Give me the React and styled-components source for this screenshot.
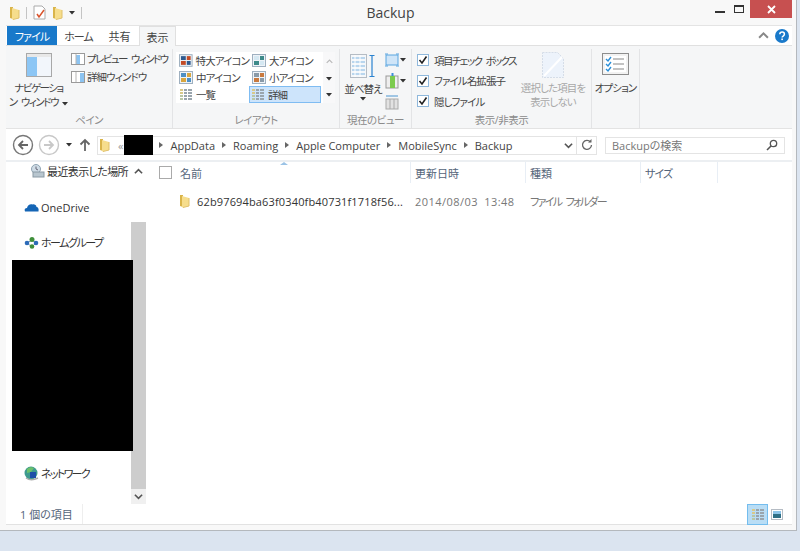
import React from 'react';
import styled, { createGlobalStyle } from 'styled-components';

const GlobalStyle = createGlobalStyle`
  html, body {
    margin: 0;
    padding: 0;
    background: #dbe4f0;
  }
  body {
    font-family: "Open Sans", "Noto Sans CJK JP", sans-serif;
    font-feature-settings: "palt";
    font-size: 11px;
    color: #333;
  }
`;

const Page = styled.div`
  width: 800px;
  height: 551px;
  overflow: hidden;
  background: #dbe4f0;
`;

const Window = styled.div`
  width: 797px;
  height: 531px;
  box-sizing: border-box;
  padding: 0 4px 5px 6px;
  background: #f8f8f8;
  border-right: 1px solid #b4b8bd;
  border-bottom: 1px solid #b4b8bd;
  display: flex;
  flex-direction: column;
`;

const TitleBar = styled.div`
  height: 25px;
  flex: none;
  position: relative;
  display: flex;
  align-items: center;
  justify-content: center;
`;

const QuickAccess = styled.div`
  position: absolute;
  left: 3px;
  top: 5px;
  display: flex;
  align-items: center;
  gap: 6px;
`;

const QuickSep = styled.span`
  width: 1px;
  height: 12px;
  background: #c4c4c4;
`;

const Title = styled.div`
  font-size: 14px;
  color: #444;
  margin-right: 17px;
`;

const WindowButtons = styled.div`
  position: absolute;
  right: 0;
  top: 0;
  height: 18px;
  display: flex;
  align-items: flex-start;
`;

const MinButton = styled.span`
  width: 10px;
  height: 2px;
  background: #333;
  margin: 11px 9px 0 0;
`;

const MaxButton = styled.span`
  width: 8px;
  height: 5px;
  border: 1px solid #333;
  border-top-width: 2px;
  margin: 5px 6px 0 0;
`;

const CloseButton = styled.span`
  width: 42px;
  height: 18px;
  background: #c75050;
  color: #fff;
  display: flex;
  align-items: center;
  justify-content: center;
`;

const TabRow = styled.div`
  height: 21px;
  flex: none;
  box-sizing: border-box;
  display: flex;
  align-items: stretch;
  background: #fff;
  border-top: 1px solid #e4e4e4;
  border-bottom: 1px solid #e0e0e0;
  position: relative;
`;

const FileTab = styled.div`
  width: 50px;
  margin-left: 1px;
  background: #1979ca;
  color: #fff;
  letter-spacing: -0.9px;
  display: flex;
  align-items: center;
  justify-content: center;
`;

const Tab = styled.div`
  width: ${(p) => p.$width}px;
  display: flex;
  align-items: center;
  justify-content: center;
  color: #444;
  letter-spacing: ${(p) => p.$tight || 0}px;
  box-sizing: border-box;
  ${(p) => p.$active && `
    background: #f5f6f7;
    border: 1px solid #e0e0e0;
    border-bottom: none;
    margin-bottom: -1px;
    position: relative;
  `}
`;

const TabRight = styled.div`
  margin-left: auto;
  display: flex;
  align-items: center;
  gap: 6px;
  padding-right: 3px;
`;

const Ribbon = styled.div`
  height: 83px;
  flex: none;
  box-sizing: border-box;
  display: flex;
  background: #f5f6f7;
  border-bottom: 1px solid #e3e3e3;
  font-size: 10.5px;
  letter-spacing: -0.9px;
  word-spacing: 3px;
`;

const Group = styled.div`
  width: ${(p) => p.$width}px;
  flex: none;
  box-sizing: border-box;
  display: flex;
  flex-direction: column;
  margin-top: 3px;
  border-right: 1px solid #e3e4e6;
`;

const GroupBody = styled.div`
  flex: 1;
  display: flex;
  min-height: 0;
`;

const GroupLabel = styled.div`
  height: 15px;
  flex: none;
  text-align: center;
  color: #8a8a8a;
  line-height: 14px;
  letter-spacing: -0.5px;
`;

const BigButton = styled.div`
  width: ${(p) => p.$width}px;
  margin-left: ${(p) => p.$left || 0}px;
  padding-top: ${(p) => p.$top || 0}px;
  display: flex;
  flex-direction: column;
  align-items: center;
  flex: none;
  text-align: center;
  line-height: 14px;
  color: ${(p) => (p.$disabled ? '#a8a8a8' : '#444')};
`;

const BigCaption = styled.div`
  margin-top: ${(p) => p.$gap || 2}px;
  letter-spacing: ${(p) => p.$tight || -0.9}px;
  white-space: nowrap;
`;

const CaretLine = styled.div`
  height: 6px;
  display: flex;
  align-items: center;
  justify-content: center;
`;

const PaneList = styled.div`
  display: flex;
  flex-direction: column;
  gap: 3px;
  padding-top: 2px;
`;

const SmallRow = styled.div`
  height: 15px;
  display: flex;
  align-items: center;
  gap: 2px;
  white-space: nowrap;
  letter-spacing: ${(p) => p.$tight || -0.9}px;
  color: #444;
`;

const Gallery = styled.div`
  display: flex;
  margin: 3px 0 0 3px;
  height: 51px;
`;

const GalleryGrid = styled.div`
  width: 147px;
  display: grid;
  grid-template-columns: 73px 74px;
  grid-auto-rows: 17px;
  background: #fff;
`;

const GalleryItem = styled.div`
  display: flex;
  align-items: center;
  gap: 3px;
  padding-left: 3px;
  box-sizing: border-box;
  white-space: nowrap;
  color: #444;
  ${(p) => p.$selected && `
    background: #cde4fb;
    border: 1px solid #7fbcf2;
    padding-left: 1px;
    margin-right: 2px;
  `}
`;

const GalleryScroll = styled.div`
  width: 12px;
  display: flex;
  flex-direction: column;
  align-items: center;
  justify-content: space-around;
  background: #f8f8f9;
`;

const ViewIcons = styled.div`
  display: flex;
  flex-direction: column;
  gap: 5px;
  padding-top: 3px;
`;

const ViewIcon = styled.div`
  display: flex;
  align-items: center;
  gap: 1px;
  height: 16px;
`;

const Checks = styled.div`
  display: flex;
  flex-direction: column;
  gap: 4.5px;
  padding: 3px 0 0 5px;
  width: 108px;
  box-sizing: border-box;
  flex: none;
`;

const CheckRow = styled.div`
  height: 16px;
  display: flex;
  align-items: center;
  gap: 5px;
  white-space: nowrap;
  letter-spacing: ${(p) => p.$tight || -0.9}px;
  color: #444;
`;

const CheckBox = styled.span`
  width: 10px;
  height: 10px;
  border: 1px solid #8fb8dc;
  background: #fff;
  display: flex;
  align-items: center;
  justify-content: center;
  flex: none;
`;

const AddressBar = styled.div`
  height: 33px;
  flex: none;
  background: #fff;
  display: flex;
  align-items: center;
  border-bottom: 2px solid #eceff2;
  box-sizing: border-box;
  padding-top: 1px;
`;

const NavButtons = styled.div`
  width: 91px;
  flex: none;
  display: flex;
  align-items: center;
  padding-left: 6px;
  box-sizing: border-box;
`;

const Spacer = styled.span`
  width: ${(p) => p.$width}px;
  flex: none;
`;

const AddressBox = styled.div`
  width: 500px;
  height: 19px;
  flex: none;
  box-sizing: border-box;
  border: 1px solid #e4e4e4;
  display: flex;
  align-items: center;
  position: relative;
  color: #444;
`;

const Crumb = styled.span`
  font-size: 11px;
  white-space: nowrap;
  color: ${(p) => (p.$muted ? '#999' : '#444')};
`;

const CrumbArrow = styled.span`
  width: 0;
  height: 0;
  border-left: 4px solid #666;
  border-top: 3px solid transparent;
  border-bottom: 3px solid transparent;
  margin: 0 7px;
`;

const Redaction = styled.span`
  width: 29px;
  height: 20px;
  background: #000;
  margin: 0 -1px 0 1px;
  flex: none;
`;

const AddressEnd = styled.div`
  margin-left: auto;
  height: 100%;
  display: flex;
  align-items: center;
`;

const RefreshCell = styled.div`
  width: 19px;
  height: 100%;
  border-left: 1px solid #e4e4e4;
  margin-left: 3px;
  display: flex;
  align-items: center;
  justify-content: center;
`;

const SearchBox = styled.div`
  width: 180px;
  height: 17px;
  margin-left: 8px;
  box-sizing: border-box;
  border: 1px solid #e4e4e4;
  padding: 0 6px;
  display: flex;
  align-items: center;
  justify-content: space-between;
  color: #777;
`;

const Body = styled.div`
  flex: 1;
  min-height: 0;
  display: flex;
  background: #fff;
`;

const Sidebar = styled.div`
  width: 125px;
  flex: none;
  position: relative;
`;

const NavItem = styled.div`
  display: flex;
  align-items: center;
  gap: 2px;
  height: 16px;
  position: relative;
  padding-left: ${(p) => p.$indent}px;
  margin-top: ${(p) => p.$top}px;
  letter-spacing: ${(p) => p.$tight || 0}px;
  white-space: nowrap;
  color: #333;
`;

const BlackBlock = styled.div`
  width: 121px;
  height: 191px;
  margin: 10px 0 0 6px;
  background: #000;
  position: relative;
`;

const ScrollBar = styled.div`
  width: 15px;
  flex: none;
  background: #fff;
  display: flex;
  flex-direction: column;
  align-items: center;
`;

const ScrollEnd = styled.div`
  height: ${(p) => (p.$bottom ? 15 : 18)}px;
  width: 100%;
  flex: none;
  background: ${(p) => (p.$bottom ? '#f0f0f0' : '#fff')};
  display: flex;
  align-items: center;
  justify-content: center;
`;

const ScrollGap = styled.div`
  height: 42px;
  flex: none;
`;

const ScrollThumb = styled.div`
  flex: 1;
  width: 100%;
  background: #cdcdcd;
`;

const Files = styled.div`
  flex: 1;
  min-width: 0;
  position: relative;
`;

const HeaderRow = styled.div`
  height: 21px;
  display: flex;
  align-items: stretch;
  position: relative;
`;

const HeaderCell = styled.div`
  width: ${(p) => p.$width}px;
  flex: none;
  box-sizing: border-box;
  padding-left: ${(p) => p.$pad}px;
  letter-spacing: ${(p) => p.$tight || 0}px;
  display: flex;
  align-items: center;
  color: #55657a;
  border-right: 1px solid #e8eef5;
`;

const HeaderCheck = styled.span`
  width: 11px;
  height: 11px;
  border: 1px solid #aaa;
  margin-right: 8px;
  flex: none;
`;

const SortCaret = styled.span`
  position: absolute;
  left: 134px;
  top: 0;
  width: 0;
  height: 0;
  border-left: 4px solid transparent;
  border-right: 4px solid transparent;
  border-bottom: 3px solid #9bc3e6;
`;

const FileRow = styled.div`
  height: 22px;
  margin-top: 7px;
  display: flex;
  align-items: center;
`;

const FileCell = styled.div`
  width: ${(p) => p.$width}px;
  flex: none;
  box-sizing: border-box;
  padding-left: ${(p) => p.$pad}px;
  display: flex;
  align-items: center;
  gap: 7px;
  white-space: nowrap;
  letter-spacing: ${(p) => p.$spacing || 0}px;
  word-spacing: 3px;
  color: ${(p) => (p.$muted ? '#777' : '#333')};
  font-size: 11px;
`;

const StatusBar = styled.div`
  height: 21px;
  flex: none;
  box-sizing: border-box;
  background: #fff;
  display: flex;
  align-items: center;
  padding-left: 14px;
  color: #55657a;
  border-bottom: 1px solid #e2e2e2;
`;

const StatusText = styled.div`
  width: 62px;
  height: 100%;
  display: flex;
  align-items: center;
  border-right: 1px solid #eee;
`;

const ViewToggles = styled.div`
  margin-left: auto;
  margin-right: 9px;
  display: flex;
  align-items: center;
  gap: 3px;
`;

const ToggleButton = styled.div`
  width: ${(p) => (p.$on ? 21 : 12)}px;
  height: ${(p) => (p.$on ? 21 : 12)}px;
  box-sizing: border-box;
  display: flex;
  align-items: center;
  justify-content: center;
  ${(p) => p.$on && 'background: #b9ddf5; border: 1px solid #74bdee;'}
`;

const Folder = () => (
  <svg width="11" height="14" viewBox="0 0 11 14">
    <path d="M1 1l3 0 0 12-3-1z" fill="#d9b44a" />
    <path d="M3 2l7 2v8l-7 1.5z" fill="#f6dd8c" />
    <path d="M10 4v8l-6 1.5" fill="none" stroke="#e0c06a" />
  </svg>
);

const PaneIcon = ({ right }) => (
  <svg width="14" height="14" viewBox="0 0 14 14">
    <rect x=".5" y="1.5" width="13" height="11" fill="#fff" stroke="#9a9a9a" />
    {right ? (
      <rect x="9" y="3" width="4" height="9" fill="#8cc4f2" />
    ) : (
      <rect x="5" y="3" width="4" height="9" fill="#8cc4f2" />
    )}
    <path d="M5 2v10" stroke="#b5b5b5" />
  </svg>
);

const NavPaneIcon = () => (
  <svg width="26" height="24" viewBox="0 0 26 24">
    <rect x=".5" y=".5" width="25" height="23" fill="#fff" stroke="#a8a8a8" />
    <rect x="1" y="1" width="24" height="3" fill="#e8e8e8" />
    <rect x="1" y="4" width="10" height="19" fill="#8cc6f5" />
    <rect x="11" y="4" width="14" height="19" fill="#f2f6fb" />
  </svg>
);

const Thumb = ({ kind }) => {
  const fills = {
    xl: ['#2e5a8f', '#c24a25'],
    l: ['#d5e8f2', '#3d8a8a'],
    m: ['#4d8fc4', '#d9a63f'],
    s: ['#8a9aa8', '#c9793e'],
  }[kind];
  if (kind === 'list' || kind === 'detail') {
    return (
      <svg width="14" height="13" viewBox="0 0 14 13">
        {[1, 4, 7, 10].map((y) => (
          <g key={y}>
            <rect x="1" y={y} width="3" height="2" fill={y < 7 ? '#d8c98a' : '#b9c7a5'} />
            <rect x="5" y={y} width="3" height="2" fill="#9aa5ad" />
            <rect x="9" y={y} width="4" height="2" fill="#9aa5ad" />
          </g>
        ))}
      </svg>
    );
  }
  return (
    <svg width="14" height="13" viewBox="0 0 14 13">
      <rect x=".5" y=".5" width="13" height="12" fill="#eef3f8" stroke="#9fb0c0" />
      <rect x="2" y="2" width="5" height="4" fill={fills[0]} />
      <rect x="8" y="2" width="4" height="4" fill={fills[1]} />
      <rect x="2" y="7" width="5" height="4" fill={fills[1]} />
      <rect x="8" y="7" width="4" height="4" fill={fills[0]} />
    </svg>
  );
};

const Check = () => (
  <svg width="10" height="10" viewBox="0 0 10 10">
    <path d="M1.5 5l2.5 3 4.5-6.5" fill="none" stroke="#222" strokeWidth="1.6" />
  </svg>
);

const NavCircle = ({ on }) => (
  <svg width="22" height="22" viewBox="0 0 22 22">
    <circle cx="11" cy="11" r="9.5" fill="#fff" stroke={on ? '#777' : '#c8c8c8'} strokeWidth="1.4" />
    {on ? (
      <path d="M16 11H7m4-4l-4 4 4 4" fill="none" stroke="#666" strokeWidth="1.8" />
    ) : (
      <path d="M6 11h9m-4-4l4 4-4 4" fill="none" stroke="#c8c8c8" strokeWidth="1.8" />
    )}
  </svg>
);

const Chevron = ({ up, color = '#666', size = 9 }) => (
  <svg width={size} height={size} viewBox="0 0 10 10">
    <path d={up ? 'M1 7l4-4 4 4' : 'M1 3l4 4 4-4'} fill="none" stroke={color} strokeWidth="1.8" />
  </svg>
);

const Caret = () => (
  <svg width="6" height="4" viewBox="0 0 6 4">
    <path d="M0 0h6L3 3.5z" fill="#333" />
  </svg>
);

const OneDriveIcon = () => (
  <svg width="15" height="10" viewBox="0 0 15 10">
    <path d="M1 9.5C0 7.5 1 6 3 6c.5-2.5 3-4.5 5.5-3.500 1.500-.5 4 .5 4 2.500 1.500 0 2.500 1.500 2 4.500z" fill="#1565b5" />
  </svg>
);

const GroupIcon = () => (
  <svg width="15" height="13" viewBox="0 0 15 13">
    <path d="M3 7l5-3 4 3-4 4z" fill="none" stroke="#7a9ab8" />
    <circle cx="8" cy="3.500" r="2.500" fill="#3f8f3a" />
    <circle cx="3" cy="7" r="2.300" fill="#2c6bb8" />
    <circle cx="12" cy="7" r="2.300" fill="#2c6bb8" />
    <circle cx="8" cy="10.500" r="2.300" fill="#3f8f3a" />
  </svg>
);

const NetworkIcon = () => (
  <svg width="15" height="15" viewBox="0 0 15 15">
    <circle cx="7" cy="7" r="6.500" fill="#3e9a8e" />
    <path d="M3 3c2-2 5-2 7-1L7 6 3 7z" fill="#6cc06a" />
    <rect x="6" y="6" width="6" height="6" fill="#1e4fa8" />
    <path d="M2 12c3 2 8 2 12 0" fill="none" stroke="#aaa" strokeWidth="1.500" />
  </svg>
);

const RecentIcon = () => (
  <svg width="15" height="15" viewBox="0 0 15 15">
    <circle cx="6" cy="5" r="4.500" fill="#cfdce6" stroke="#8fa3b2" />
    <rect x="3" y="8" width="11" height="5" fill="#b8c6cf" stroke="#8a9aa5" />
    <path d="M6 2.500V5l2 1" fill="none" stroke="#667" />
  </svg>
);

const SortIcon = () => (
  <svg width="26" height="24" viewBox="0 0 26 24">
    <rect x=".5" y=".5" width="16" height="23" fill="#f4f7fa" stroke="#b5bcc4" />
    {[4, 8, 12, 16, 20].map((y) => (
      <path key={y} d={`M2 ${y}h13`} stroke="#b9d6ee" strokeWidth="2" />
    ))}
    <path d="M5 1v22M10 1v22" stroke="#fff" />
    <path d="M22 1v22M19.500 1.500h5M19.500 22.500h5" stroke="#2b83d0" strokeWidth="1.200" fill="none" />
  </svg>
);

const PaneSize = () => (
  <svg width="14" height="14" viewBox="0 0 14 14">
    <rect x="1" y="2" width="12" height="10" fill="#cfe5f8" stroke="#5aa5e0" />
    <path d="M0 1h3M11 1h3M0 13h3M11 13h3" stroke="#5aa5e0" />
  </svg>
);

const ColumnAdd = () => (
  <svg width="14" height="16" viewBox="0 0 14 16">
    <rect x="1" y="3" width="12" height="12" fill="#eee" stroke="#999" />
    <rect x="5" y="3" width="5" height="12" fill="#7ccb4e" />
    <path d="M7.500 0v3" stroke="#3a8fd8" strokeWidth="2" />
  </svg>
);

const ColumnFit = () => (
  <svg width="14" height="16" viewBox="0 0 14 16">
    <path d="M1 2h12" stroke="#4a95d0" />
    <rect x="1" y="5" width="12" height="10" fill="#e2e2e2" stroke="#aaa" />
    <path d="M5 5v10M9 5v10" stroke="#aaa" />
  </svg>
);

const HideIcon = () => (
  <svg width="22" height="26" viewBox="0 0 22 26">
    <path d="M.5.500h15l6 6v19H.500z" fill="#edf3fb" stroke="#d5dde8" strokeDasharray="2 1" />
    <path d="M2 24L20 5" stroke="#fff" strokeWidth="2" />
  </svg>
);

const OptionsIcon = () => (
  <svg width="27" height="22" viewBox="0 0 27 22">
    <rect x=".5" y=".5" width="26" height="21" fill="#f2f2f2" stroke="#8d8d8d" />
    <rect x="3" y="3" width="21" height="16" fill="#fff" />
    {[6, 11, 16].map((y) => (
      <g key={y}>
        <path d={`M4 ${y}l2 2 3-4`} fill="none" stroke="#2b8fd8" strokeWidth="1.400" />
        <path d={`M11 ${y}h11`} stroke="#9a9a9a" strokeWidth="1.200" />
      </g>
    ))}
  </svg>
);

const NoteIcon = () => (
  <svg width="13" height="15" viewBox="0 0 13 15">
    <path d="M1 1h8l3 3v10H1z" fill="#fff" stroke="#aaa" />
    <path d="M4 9l2 3 5-7" fill="none" stroke="#d9532c" strokeWidth="1.500" />
  </svg>
);

const App = () => (
  <Page>
    <GlobalStyle />
    <Window>
      <TitleBar>
        <QuickAccess>
          <Folder />
          <QuickSep />
          <NoteIcon />
          <Folder />
          <Caret />
          <QuickSep />
        </QuickAccess>
        <Title>Backup</Title>
        <WindowButtons>
          <MinButton />
          <MaxButton />
          <CloseButton>
            <svg width="9" height="9" viewBox="0 0 9 9">
              <path d="M1 1l7 7M8 1L1 8" stroke="#fff" strokeWidth="1.800" />
            </svg>
          </CloseButton>
        </WindowButtons>
      </TitleBar>

      <TabRow>
        <FileTab>ファイル</FileTab>
        <Tab $width={43} $tight={-1}>ホーム</Tab>
        <Tab $width={39}>共有</Tab>
        <Tab $width={37} $active>表示</Tab>
        <TabRight>
          <Chevron up color="#888" size={11} />
          <svg width="14" height="14" viewBox="0 0 14 14">
            <circle cx="7" cy="7" r="7" fill="#1979ca" />
            <path d="M4.800 5.200c.2-2.800 4.600-2.800 4.600 0 0 1.800-2.300 1.800-2.300 3.300" fill="none" stroke="#fff" strokeWidth="1.500" />
            <rect x="6.300" y="9.500" width="1.600" height="1.600" fill="#fff" />
          </svg>
        </TabRight>
      </TabRow>

      <Ribbon>
        <Group $width={167}>
          <GroupBody>
            <BigButton $width={65} $top={4}>
              <NavPaneIcon />
              <BigCaption $gap={4} $tight={-1.5}>
                ナビゲーショ
                <br />
                ン ウィンドウ <Caret />
              </BigCaption>
            </BigButton>
            <PaneList>
              <SmallRow $tight={-1.6}>
                <PaneIcon />
                プレビュー ウィンドウ
              </SmallRow>
              <SmallRow>
                <PaneIcon right />
                詳細ウィンドウ
              </SmallRow>
            </PaneList>
          </GroupBody>
          <GroupLabel>ペイン</GroupLabel>
        </Group>

        <Group $width={167}>
          <GroupBody>
            <Gallery>
              <GalleryGrid>
                <GalleryItem><Thumb kind="xl" />特大アイコン</GalleryItem>
                <GalleryItem><Thumb kind="l" />大アイコン</GalleryItem>
                <GalleryItem><Thumb kind="m" />中アイコン</GalleryItem>
                <GalleryItem><Thumb kind="s" />小アイコン</GalleryItem>
                <GalleryItem><Thumb kind="list" />一覧</GalleryItem>
                <GalleryItem $selected><Thumb kind="detail" />詳細</GalleryItem>
              </GalleryGrid>
              <GalleryScroll>
                <Chevron up color="#bbb" size={7} />
                <Caret />
                <Caret />
              </GalleryScroll>
            </Gallery>
          </GroupBody>
          <GroupLabel>レイアウト</GroupLabel>
        </Group>

        <Group $width={72}>
          <GroupBody>
            <BigButton $width={44} $left={1} $top={5}>
              <SortIcon />
              <BigCaption $gap={4}>並べ替え</BigCaption>
              <CaretLine><Caret /></CaretLine>
            </BigButton>
            <ViewIcons>
              <ViewIcon><PaneSize /><Caret /></ViewIcon>
              <ViewIcon><ColumnAdd /><Caret /></ViewIcon>
              <ViewIcon><ColumnFit /></ViewIcon>
            </ViewIcons>
          </GroupBody>
          <GroupLabel>現在のビュー</GroupLabel>
        </Group>

        <Group $width={180}>
          <GroupBody>
            <Checks>
              <CheckRow $tight={-1.6}><CheckBox><Check /></CheckBox>項目チェック ボックス</CheckRow>
              <CheckRow><CheckBox><Check /></CheckBox>ファイル名拡張子</CheckRow>
              <CheckRow><CheckBox><Check /></CheckBox>隠しファイル</CheckRow>
            </Checks>
            <BigButton $width={66} $disabled $top={3}>
              <HideIcon />
              <BigCaption $gap={3}>
                選択した項目を
                <br />
                表示しない
              </BigCaption>
            </BigButton>
          </GroupBody>
          <GroupLabel>表示/非表示</GroupLabel>
        </Group>

        <Group $width={48}>
          <GroupBody>
            <BigButton $width={47} $top={4}>
              <OptionsIcon />
              <BigCaption $gap={6}>オプション</BigCaption>
            </BigButton>
          </GroupBody>
        </Group>
      </Ribbon>

      <AddressBar>
        <NavButtons>
          <NavCircle on />
          <Spacer $width={4} />
          <NavCircle />
          <Spacer $width={6} />
          <Caret />
          <Spacer $width={7} />
          <svg width="12" height="14" viewBox="0 0 12 14">
            <path d="M6 13V2M1.500 6.500L6 2l4.500 4.500" fill="none" stroke="#666" strokeWidth="1.800" />
          </svg>
        </NavButtons>
        <AddressBox>
          <Spacer $width={1} />
          <Folder />
          <Spacer $width={8} />
          <Crumb $muted>«</Crumb>
          <Redaction />
          <CrumbArrow />
          <Crumb>AppData</Crumb>
          <CrumbArrow />
          <Crumb>Roaming</Crumb>
          <CrumbArrow />
          <Crumb>Apple Computer</Crumb>
          <CrumbArrow />
          <Crumb>MobileSync</Crumb>
          <CrumbArrow />
          <Crumb>Backup</Crumb>
          <AddressEnd>
            <Chevron color="#555" />
            <RefreshCell>
              <svg width="12" height="12" viewBox="0 0 12 12">
                <path d="M9.500 3a4.500 4.500 0 1 0 1 3" fill="none" stroke="#666" strokeWidth="1.300" />
                <path d="M7 3.500h3.500V0z" fill="#666" />
              </svg>
            </RefreshCell>
          </AddressEnd>
        </AddressBox>
        <SearchBox>
          Backupの検索
          <svg width="12" height="12" viewBox="0 0 12 12">
            <circle cx="7.500" cy="4.500" r="3.200" fill="none" stroke="#555" strokeWidth="1.300" />
            <path d="M5 7l-4 4" stroke="#555" strokeWidth="1.600" />
          </svg>
        </SearchBox>
      </AddressBar>

      <Body>
        <Sidebar>
          <NavItem $indent={24} $top={1} $tight={-0.6}><RecentIcon />最近表示した場所</NavItem>
          <NavItem $indent={18} $top={20}><OneDriveIcon />OneDrive</NavItem>
          <NavItem $indent={18} $top={19} $tight={-1.5}><GroupIcon />ホームグループ</NavItem>
          <BlackBlock />
          <NavItem $indent={18} $top={14} $tight={-1.7}><NetworkIcon />ネットワーク</NavItem>
        </Sidebar>
        <ScrollBar>
          <ScrollEnd><Chevron up color="#555" /></ScrollEnd>
          <ScrollGap />
          <ScrollThumb />
          <ScrollEnd $bottom><Chevron color="#555" /></ScrollEnd>
        </ScrollBar>
        <Files>
          <HeaderRow>
            <SortCaret />
            <HeaderCell $width={265} $pad={13}><HeaderCheck />名前</HeaderCell>
            <HeaderCell $width={115} $pad={4}>更新日時</HeaderCell>
            <HeaderCell $width={115} $pad={4}>種類</HeaderCell>
            <HeaderCell $width={77} $pad={4} $tight={-1}>サイズ</HeaderCell>
          </HeaderRow>
          <FileRow>
            <FileCell $width={265} $pad={33} $spacing={0.15}>
              <Folder />
              62b97694ba63f0340fb40731f1718f56...
            </FileCell>
            <FileCell $width={115} $pad={4} $muted $spacing={0.45}>2014/08/03 13:48</FileCell>
            <FileCell $width={115} $pad={4} $muted $spacing={-1.7}>ファイル フォルダー</FileCell>
          </FileRow>
        </Files>
      </Body>

      <StatusBar>
        <StatusText>1 個の項目</StatusText>
        <ViewToggles>
          <ToggleButton $on><Thumb kind="detail" /></ToggleButton>
          <ToggleButton>
            <svg width="12" height="11" viewBox="0 0 12 11">
              <rect x=".5" y=".5" width="11" height="10" fill="#fff" stroke="#b5bcc4" />
              <rect x="2" y="2" width="8" height="3" fill="#8cc4e8" />
              <rect x="2" y="5" width="8" height="4" fill="#2e6f86" />
            </svg>
          </ToggleButton>
        </ViewToggles>
      </StatusBar>
    </Window>
  </Page>
);

export default App;
